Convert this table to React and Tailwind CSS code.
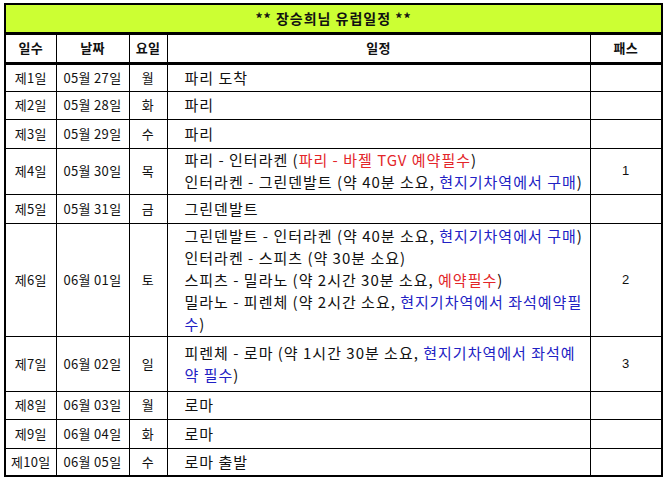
import React from 'react';

const R = ({ children }) => <span className="text-[#e3262a]">{children}</span>;
const B = ({ children }) => <span className="text-[#2121c4]">{children}</span>;

const rows = [
  { day: '제1일', date: '05월 27일', dow: '월', h: 'h-[28px]', lines: ['파리 도착'] },
  { day: '제2일', date: '05월 28일', dow: '화', h: 'h-[28px]', lines: ['파리'] },
  { day: '제3일', date: '05월 29일', dow: '수', h: 'h-[29px]', lines: ['파리'] },
  {
    day: '제4일', date: '05월 30일', dow: '목', h: 'h-[46px]', pass: '1',
    lines: [
      <>파리 - 인터라켄 (<R>파리 - 바젤 TGV 예약필수</R>)</>,
      <>인터라켄 - 그린덴발트 (약 40분 소요, <B>현지기차역에서 구매</B>)</>,
    ],
  },
  { day: '제5일', date: '05월 31일', dow: '금', h: 'h-[29px]', lines: ['그린덴발트'] },
  {
    day: '제6일', date: '06월 01일', dow: '토', h: 'h-[113px]', pass: '2',
    lines: [
      <>그린덴발트 - 인터라켄 (약 40분 소요, <B>현지기차역에서 구매</B>)</>,
      <>인터라켄 - 스피츠 (약 30분 소요)</>,
      <>스피츠 - 밀라노 (약 2시간 30분 소요, <R>예약필수</R>)</>,
      <>밀라노 - 피렌체 (약 2시간 소요, <B>현지기차역에서 좌석예약필</B></>,
      <><B>수</B>)</>,
    ],
  },
  {
    day: '제7일', date: '06월 02일', dow: '일', h: 'h-[55px]', pass: '3',
    lines: [
      <>피렌체 - 로마 (약 1시간 30분 소요, <B>현지기차역에서 좌석예</B></>,
      <><B>약 필수</B>)</>,
    ],
  },
  { day: '제8일', date: '06월 03일', dow: '월', h: 'h-[28px]', lines: ['로마'] },
  { day: '제9일', date: '06월 04일', dow: '화', h: 'h-[29px]', lines: ['로마'] },
  { day: '제10일', date: '06월 05일', dow: '수', h: 'h-[28px]', lines: ['로마 출발'] },
];

const cell = 'border border-black text-center align-middle text-[13px] tracking-[0.3px]';

export default function App() {
  return (
    <div className="bg-white min-h-screen pt-[3px] pl-[4px] font-['Noto_Sans_CJK_KR',sans-serif] text-[#111]">
      <table className="w-[657px] table-fixed border-collapse border-2 border-black">
        <colgroup>
          <col className="w-[51px]" />
          <col className="w-[73px]" />
          <col className="w-[38px]" />
          <col className="w-[423px]" />
          <col className="w-[72px]" />
        </colgroup>
        <thead>
          <tr className="h-[29px]">
            <th colSpan={5} className="border border-black border-b-[3px] border-b-double bg-[#ccff33] text-[14px] tracking-[1px] font-bold text-center">
              ** 장승희님 유럽일정 **
            </th>
          </tr>
          <tr className="h-[30px]">
            {['일수', '날짜', '요일', '일정', '패스'].map((t) => (
              <th key={t} className={`${cell} font-bold border-b-[3px] border-b-double`}>{t}</th>
            ))}
          </tr>
        </thead>
        <tbody>
          {rows.map((r) => (
            <tr key={r.day} className={r.h}>
              <td className={`${cell} whitespace-nowrap`}>{r.day}</td>
              <td className={`${cell} whitespace-nowrap`}>{r.date}</td>
              <td className={cell}>{r.dow}</td>
              <td className="border border-black align-middle pl-[17px] pr-1 text-[15px] tracking-[1px] leading-[22px] whitespace-nowrap">
                {r.lines.map((l, i) => (
                  <div key={i}>{l}</div>
                ))}
              </td>
              <td className={`${cell} text-[12px] font-['Liberation_Sans',sans-serif]`}>{r.pass || ''}</td>
            </tr>
          ))}
        </tbody>
      </table>
    </div>
  );
}
